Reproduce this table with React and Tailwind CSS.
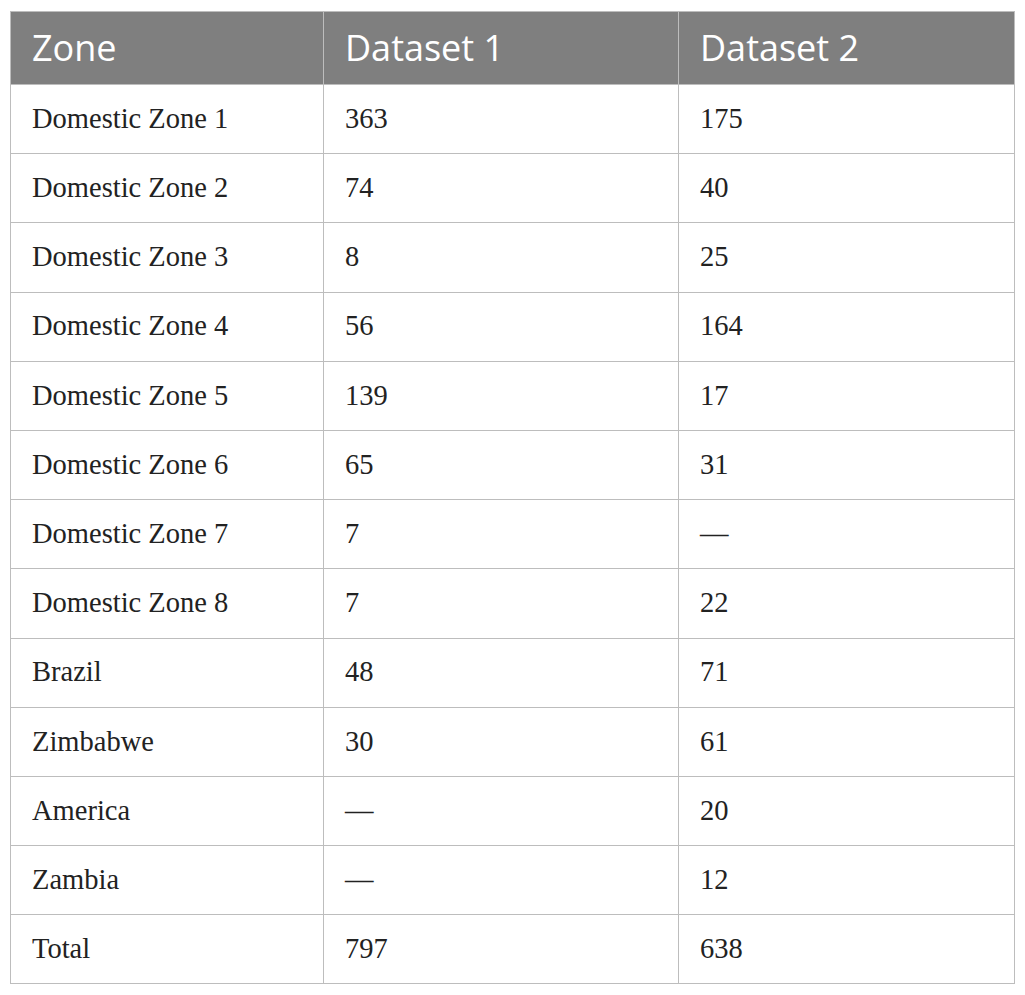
import React from "react";

const rows = [
  ["Domestic Zone 1", "363", "175"],
  ["Domestic Zone 2", "74", "40"],
  ["Domestic Zone 3", "8", "25"],
  ["Domestic Zone 4", "56", "164"],
  ["Domestic Zone 5", "139", "17"],
  ["Domestic Zone 6", "65", "31"],
  ["Domestic Zone 7", "7", "—"],
  ["Domestic Zone 8", "7", "22"],
  ["Brazil", "48", "71"],
  ["Zimbabwe", "30", "61"],
  ["America", "—", "20"],
  ["Zambia", "—", "12"],
  ["Total", "797", "638"],
];

const App = () => {
  return (
    <div className="bg-white min-h-[995px] pl-[10px] pt-[11px]">
      <table className="w-[1004px] border-collapse table-fixed">
        <colgroup>
          <col className="w-[313px]" />
          <col className="w-[355px]" />
          <col className="w-[336px]" />
        </colgroup>
        <thead>
          <tr className="h-[73px] bg-[#7f7f7f]">
            <HeadCell text="Zone" />
            <HeadCell text="Dataset 1" />
            <HeadCell text="Dataset 2" />
          </tr>
        </thead>
        <tbody>
          {rows.map((r) => (
            <tr key={r[0]} className="h-[69.2px]">
              {r.map((c, i) => (
                <BodyCell key={i} text={c} />
              ))}
            </tr>
          ))}
        </tbody>
      </table>
    </div>
  );
};

const HeadCell = ({ text }) => (
  <th className="border border-[#bdbdbd] pl-[21px] text-left align-middle font-['Open_Sans',sans-serif] font-normal text-[36px] leading-none text-white">
    {text}
  </th>
);

const BodyCell = ({ text }) => (
  <td className="border border-[#bdbdbd] pl-[21px] align-middle font-['Liberation_Serif',serif] text-[28.5px] leading-none text-[#222]">
    {text}
  </td>
);

export default App;
